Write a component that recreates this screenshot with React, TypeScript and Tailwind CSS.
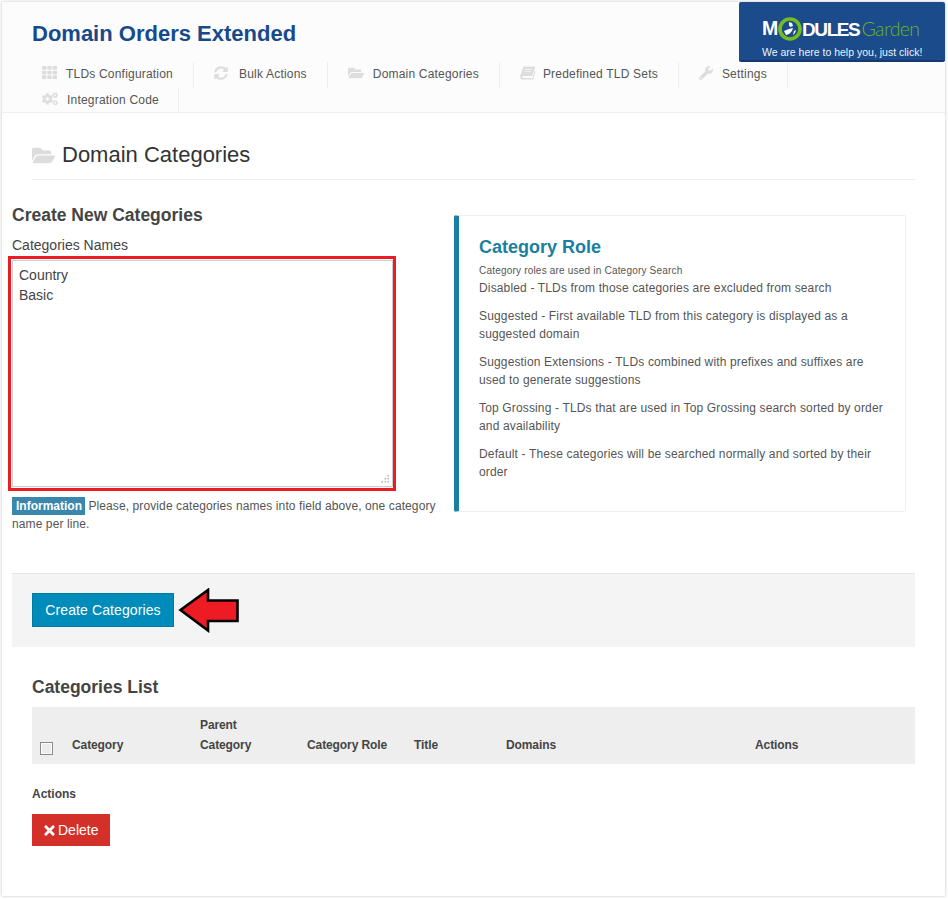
import { FaTh, FaSyncAlt, FaFolderOpen, FaWrench, FaCogs, FaTimes } from "react-icons/fa";
import type { ReactNode } from "react";

function Tab({ icon, label, iconW, pl = "pl-[10px]", box = "h-[26px] pb-[3px] pr-5" }: { icon: ReactNode; label: string; iconW: string; pl?: string; box?: string }) {
  return (
    <div className={`flex items-center border-r border-[#eeeeee] text-[12px] tracking-[0.2px] text-[#555555] ${box} ${pl}`}>
      <span className={`flex shrink-0 -translate-y-[1px] text-[#dddddd] ${iconW}`}>{icon}</span>
      <span>{label}</span>
    </div>
  );
}

function BookIcon() {
  return (
    <svg width="16" height="14" viewBox="0 0 16 14" fill="currentColor">
      <path d="M3.5 0.5H15.2L12.4 10H3.2C1.8 10 1.7 12 3.1 12H12.6L14.8 4.6L15.6 5.6L13.2 13.5H2.2C0.4 13.2 -0.2 11.4 0.5 9.4Z" />
      <path d="M5 3.5H12M4.3 5.7H11.3" stroke="#fcfcfc" strokeWidth="0.7" />
    </svg>
  );
}

function Logo() {
  return (
    <div className="absolute right-0 top-0 flex h-[60px] w-[206px] flex-col rounded-[2px] border-b-2 border-[#14396f] bg-[#1b4b8a] pl-[23px] pt-[15px] text-white">
      <div className="flex h-[24px] items-center font-bold leading-none">
        <span className="w-[16px] text-[19.5px] tracking-[-1px]">M</span>
        <svg width="24" height="24" viewBox="0 0 24 24" className="shrink-0">
          <circle cx="12" cy="12" r="10" fill="#1b4b8a" stroke="#76bc21" strokeWidth="3.6" />
          <path d="M11 5l3 1 1 3-3 1-1-2zM6 14l5-2 4-1-1 3-3 3-3 1zM16 14l2-1-1 3-2 2z" fill="#ffffff" />
        </svg>
        <span className="text-[19px] tracking-[-1.4px]">DULES</span>
        <span className="ml-[2px] text-[19.5px] font-light tracking-[-0.6px] text-[#6cb31e] [font-family:Lato,sans-serif]">Garden</span>
      </div>
      <div className="mt-[4px] text-[10.5px] leading-[14px] text-[#eef3fb]">We are here to help you, just click!</div>
    </div>
  );
}

const roles = [
  "Suggested - First available TLD from this category is displayed as a suggested domain",
  "Suggestion Extensions - TLDs combined with prefixes and suffixes are used to generate suggestions",
  "Top Grossing - TLDs that are used in Top Grossing search sorted by order and availability",
  "Default - These categories will be searched normally and sorted by their order",
];

export default function App() {
  return (
    <div className="bg-white p-[2px] pr-[3px] [font-family:'Liberation_Sans',Arial,sans-serif]">
      <div className="relative h-[894px] bg-white shadow-[0_0_3px_rgba(0,0,0,0.25)]">
        <header className="relative h-[111px] border-b border-[#eeeeee] bg-[#fcfcfc] pl-[30px]">
          <Logo />
          <h1 className="pt-[18px] text-[22px] font-bold leading-[28px] text-[#174a8c]">Domain Orders Extended</h1>
          <div className="mt-[14px] flex flex-wrap">
            <Tab icon={<FaTh size={15} />} iconW="w-[24px]" label="TLDs Configuration" />
            <Tab icon={<FaSyncAlt size={14} />} iconW="w-[25px]" pl="pl-[20px]" label="Bulk Actions" />
            <Tab icon={<FaFolderOpen size={16} />} iconW="w-[25px]" pl="pl-[20px]" label="Domain Categories" />
            <Tab icon={<BookIcon />} iconW="w-[23px]" pl="pl-[20px]" label="Predefined TLD Sets" />
            <Tab icon={<FaWrench size={14} />} iconW="w-[23px]" pl="pl-[20px]" label="Settings" />
          </div>
          <div className="flex">
            <Tab icon={<FaCogs size={16} />} iconW="w-[25px]" box="h-[24px] pb-[1px] pr-[19px]" label="Integration Code" />
          </div>
        </header>

        <div className="mx-[30px] flex h-[67px] items-start gap-[7px] border-b border-[#eeeeee] pt-[28px]">
          <FaFolderOpen size={23} className="mt-[3px] text-[#dddddd]" />
          <h2 className="text-[22px] leading-[28px] text-[#333333]">Domain Categories</h2>
        </div>

        <div className="mt-[24px] flex pl-[10px]">
          <div className="w-[428px]">
            <h3 className="text-[17.5px] font-bold leading-[22px] text-[#444444]">Create New Categories</h3>
            <label className="mt-[9px] block text-[14px] leading-[20px] text-[#444444]">Categories Names</label>
            <div className="relative -ml-[4px] mt-[1px] h-[235px] w-[388px] border-[3px] border-[#ed1c24] py-[1px] pl-[1px]">
              <textarea
                defaultValue={"Country\nBasic"}
                className="block h-[227px] w-[381px] resize-none border border-[#cccccc] bg-white px-[6px] py-[4px] text-[14px] leading-[20px] text-[#444444] outline-none"
              />
              <svg width="9" height="9" viewBox="0 0 9 9" className="absolute bottom-[4px] right-[3px]" fill="#b5b5b5">
                <rect x="6.5" y="0" width="1.5" height="1.5" />
                <rect x="3.5" y="3" width="1.5" height="1.5" />
                <rect x="6.5" y="3" width="1.5" height="1.5" />
                <rect x="0.5" y="6" width="1.5" height="1.5" />
                <rect x="3.5" y="6" width="1.5" height="1.5" />
                <rect x="6.5" y="6" width="1.5" height="1.5" />
              </svg>
            </div>
            <p className="mt-[6px] text-[12px] leading-[18px] tracking-[0.1px] text-[#555555]">
              <span className="bg-[#3a87ad] py-[2px] pl-[4px] pr-[3px] font-bold tracking-normal text-white">Information</span> Please, provide categories names into field above, one category name per line.
            </p>
          </div>
          <aside className="ml-[14px] mt-[11px] h-[297px] w-[452px] rounded-[2px] border border-l-[5px] border-[#eeeeee] border-l-[#1a80a0] pl-[20px] pr-[20px] pt-[19px]">
            <h3 className="text-[18px] font-bold leading-[24px] text-[#1a80a0]">Category Role</h3>
            <p className="mt-[5px] text-[10px] leading-[14px] tracking-[0.2px] text-[#555555]">Category roles are used in Category Search</p>
            <p className="mt-[1px] text-[12px] leading-[18px] tracking-[0.15px] text-[#555555]">Disabled - TLDs from those categories are excluded from search</p>
            {roles.map((r) => (
              <p key={r} className="mt-[10px] text-[12px] leading-[18px] tracking-[0.15px] text-[#555555]">{r}</p>
            ))}
          </aside>
        </div>

        <div className="ml-[10px] mr-[30px] mt-[40px] flex h-[74px] items-center gap-[4px] border-t border-[#e5e5e5] bg-[#f4f4f4] pb-[1px] pl-[20px]">
          <button className="h-[34px] w-[142px] border border-[#007ba3] bg-[#008cba] text-[14px] tracking-[0.1px] text-white">Create Categories</button>
          <svg width="62" height="45" viewBox="0 0 62 45" className="shrink-0">
            <path d="M2.5 22 L30 2 V12.5 H59.5 V33 H30 V42.5 Z" fill="#ed1c24" stroke="#000000" strokeWidth="2.6" strokeLinejoin="miter" />
          </svg>
        </div>

        <section className="mx-[30px] mt-[29px]">
          <h3 className="text-[17.5px] font-bold leading-[22px] text-[#444444]">Categories List</h3>
          <table className="mt-[9px] w-full table-fixed text-left text-[12px] font-bold tracking-[-0.1px] text-[#444444]">
            <colgroup>
              <col className="w-[40px]" />
              <col className="w-[128px]" />
              <col className="w-[107px]" />
              <col className="w-[107px]" />
              <col className="w-[92px]" />
              <col className="w-[249px]" />
              <col />
            </colgroup>
            <thead className="bg-[#eeeeee]">
              <tr className="h-[57px]">
                <th className="pb-[9px] pl-[8px] align-bottom">
                  <input type="checkbox" className="block h-[13px] w-[13px] appearance-none border border-[#8a8a8a] bg-[#ececec] shadow-[inset_0_0_0_1px_#ffffff]" />
                </th>
                <th className="pb-[9px] align-bottom leading-[20px]">Category</th>
                <th className="pb-[9px] align-bottom leading-[20px]">Parent<br />Category</th>
                <th className="pb-[9px] align-bottom leading-[20px]">Category Role</th>
                <th className="pb-[9px] align-bottom leading-[20px]">Title</th>
                <th className="pb-[9px] align-bottom leading-[20px]">Domains</th>
                <th className="pb-[9px] align-bottom leading-[20px]">Actions</th>
              </tr>
            </thead>
          </table>
          <div className="mt-[22px] text-[12px] font-bold leading-[16px] text-[#444444]">Actions</div>
          <button className="mt-[12px] flex h-[32px] w-[78px] items-center gap-[1px] bg-[#d4302a] pl-[10px] text-[14px] text-white">
            <FaTimes size={15} />
            Delete
          </button>
        </section>
      </div>
    </div>
  );
}
